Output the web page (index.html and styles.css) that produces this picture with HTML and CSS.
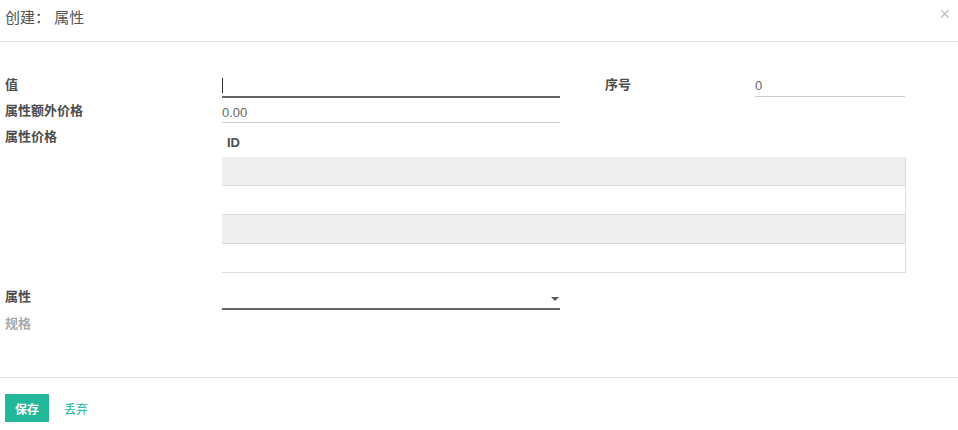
FILE: index.html
```html
<!DOCTYPE html>
<html lang="zh">
<head>
	<meta charset="UTF-8">
	<title>创建： 属性</title>
	<link rel="stylesheet" href="styles.css">
</head>
<body>
	<!-- dialog header -->
	<div class="modal-header">
		<h4 class="modal-title">创建： 属性</h4>
		<span class="close">&times;</span>
	</div>

	<!-- form body -->
	<div class="modal-body">
		<div class="row row-first">
			<label class="lbl">值</label>
			<div class="field field-main focused"><span class="caret"></span></div>
			<div class="spacer"></div>
			<label class="lbl lbl-side">序号</label>
			<div class="field field-side">0</div>
		</div>
		<div class="row row-second">
			<label class="lbl">属性额外价格</label>
			<div class="field field-main">0.00</div>
		</div>
		<div class="row row-table">
			<label class="lbl">属性价格</label>
			<div class="list">
				<div class="list-head">ID</div>
				<div class="list-row odd"></div>
				<div class="list-row"></div>
				<div class="list-row odd"></div>
				<div class="list-row"></div>
			</div>
		</div>
		<div class="row row-select">
			<label class="lbl">属性</label>
			<div class="field field-main focused select"><span class="arrow"></span></div>
		</div>
		<div class="row row-muted">
			<label class="lbl muted">规格</label>
		</div>
	</div>

	<!-- footer -->
	<div class="modal-footer">
		<button class="btn-primary">保存</button>
		<a class="btn-link">丢弃</a>
	</div>
</body>
</html>
```

FILE: styles.css
```css
body {
	margin: 0;
	padding: 0;
	background-color: #fff;
	font-family: "Liberation Sans", "Noto Sans CJK SC", sans-serif;
	font-size: 13px;
	color: #4c4c4c;
}

.modal-header {
	display: flex;
	align-items: center;
	justify-content: space-between;
	height: 41px;
	padding: 0 8px 0 5px;
	border-bottom: 1px solid #e5e5e5;
}

.modal-title {
	margin: 0 0 9px 0;
	font-size: 15px;
	font-weight: normal;
	color: #555;
}

.close {
	margin-bottom: 14px;
	font-size: 18px;
	line-height: 18px;
	color: #c4c4c4;
}

.modal-body {
	padding: 32px 0 0 5px;
	height: 303px;
}

.row {
	display: flex;
	align-items: flex-start;
}

.lbl {
	width: 217px;
	flex-shrink: 0;
	line-height: 22px;
	font-weight: bold;
	color: #4c4c4c;
}

.lbl-side {
	width: 150px;
}

.muted {
	color: #aaa;
}

.spacer {
	width: 45px;
}

.field {
	position: relative;
	height: 22px;
	line-height: 24px;
	border-bottom: 1px solid #ccc;
	color: #666;
	box-sizing: content-box;
}

.field-main {
	width: 338px;
}

.field-side {
	width: 150px;
	height: 22px;
}

.focused {
	border-bottom: 2px solid #666;
}

.caret {
	position: absolute;
	left: 0;
	top: 4px;
	width: 1px;
	height: 15px;
	background-color: #333;
}

.row-second {
	margin-top: 2px;
}

.row-second .field {
	height: 22px;
	line-height: 26px;
}

.row-table {
	margin-top: 3px;
}

.list {
	width: 684px;
	margin-top: 3px;
}

.list-head {
	height: 28px;
	line-height: 28px;
	padding-left: 5px;
	font-weight: bold;
	color: #4c4c4c;
}

.list-row {
	height: 28px;
	border-bottom: 1px solid #ddd;
	border-right: 1px solid #ddd;
}

.odd {
	background-color: #eeefee;
}

.row-select {
	margin-top: 13px;
}

.arrow {
	position: absolute;
	right: 1px;
	top: 11px;
	width: 0;
	height: 0;
	border-left: 4px solid transparent;
	border-right: 4px solid transparent;
	border-top: 4px solid #555;
}

.row-muted {
	margin-top: 3px;
}

.modal-footer {
	display: flex;
	align-items: center;
	gap: 15px;
	padding: 16px 5px;
	border-top: 1px solid #e5e5e5;
}

.btn-primary {
	width: 44px;
	height: 28px;
	padding: 0;
	border: none;
	border-radius: 0;
	background-color: #21b799;
	color: #fff;
	font-family: inherit;
	font-size: 12px;
	font-weight: bold;
}

.btn-link {
	font-size: 12px;
	color: #21b799;
	text-decoration: none;
}
```
